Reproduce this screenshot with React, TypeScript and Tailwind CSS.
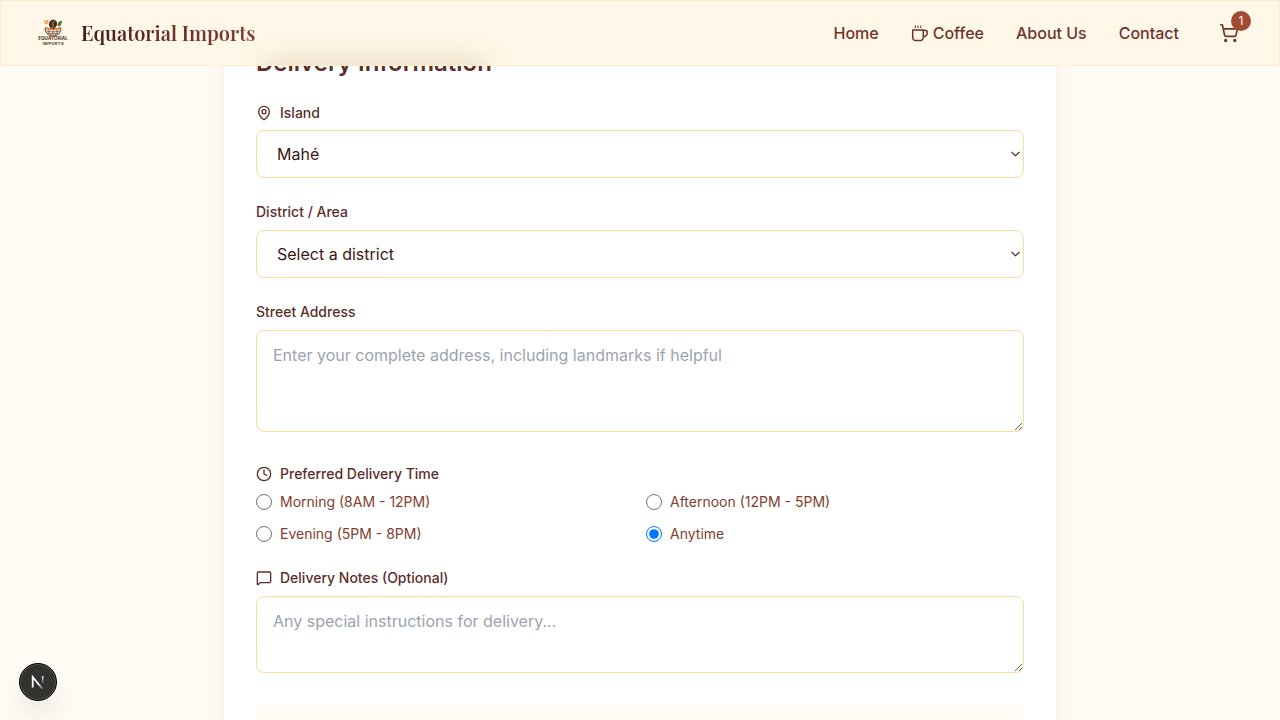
import { Clock, MapPin, MessageSquare, ShoppingCart } from "lucide-react";
import type { ReactNode } from "react";

const FIELD =
  "w-full rounded-lg border border-[#fbdc9c] bg-white text-base leading-[25.6px] text-[#3b1513] placeholder:text-[#9ca3af]";

function Label({ icon, children }: { icon?: ReactNode; children: ReactNode }) {
  return (
    <div className="flex h-5 items-center gap-2 text-sm font-medium leading-5 text-[#5d2e29]">
      {icon}
      <span>{children}</span>
    </div>
  );
}

function Select({ children }: { children: ReactNode }) {
  return (
    <div className="relative">
      <select className={`${FIELD} block h-[47.6px] appearance-none px-5 pb-0 pt-[1.8px]`}>
        <option>{children}</option>
      </select>
      <svg width="10" height="6" viewBox="0 0 10 6" fill="none" className="pointer-events-none absolute right-[3.5px] top-[21px]">
        <path d="m.5 .8 4 4 4-4" stroke="#3b1513" strokeWidth="1.100" />
      </svg>
    </div>
  );
}

function Logo() {
  return (
    <svg width="32" height="32" viewBox="0 0 32 32" fill="none">
      <path d="M8 11.500a8 7.800 0 0 0 16 0Z" fill="#f7ecd5" stroke="#65483a" strokeWidth="1" />
      <path d="M9 14q7 2 14 0M12 11.500v5l3 2M20 11.500v5l-3 2M16 11.500v7M10.500 16.200q5.500 1.500 11 0" stroke="#65483a" strokeWidth=".7" />
      <path d="M8 9.800q8 3.500 16 0l-.5 2q-7.500 2.500-15 0Z" fill="#e47832" />
      <ellipse cx="16" cy="7" rx="4" ry="4.500" transform="rotate(25 16 7)" fill="#4b2818" />
      <path d="M17.500 3.500q-3 3-1.500 4.500T14.500 11" stroke="#e7c8a3" strokeWidth=".7" />
      <path d="M20.500 8.500q-.2-4 4.300-5 .5 4-2.500 6Z" fill="#438038" />
      <path d="m7 3.500 3 1.500M7.500 6.500l3-.5M10.500 3l.5 2.500" stroke="#f08a4a" strokeWidth="1.300" />
      <text x="16" y="23.400" textAnchor="middle" textLength="29.500" lengthAdjust="spacingAndGlyphs" fontFamily="Inter, sans-serif" fontSize="4.800" fontWeight="700" fill="#54382d">EQUATORIAL</text>
      <text x="16" y="28" textAnchor="middle" textLength="21" fontFamily="Inter, sans-serif" fontSize="4" fontWeight="700" fill="#54382d">IMPORTS</text>
    </svg>
  );
}

function CoffeeIcon() {
  return (
    <svg width="18" height="18" viewBox="0 0 18 18" fill="none" stroke="currentColor" strokeWidth="1.500">
      <path d="M1.700 5h10.600v7.600a3 3 0 0 1-3 3H4.700a3 3 0 0 1-3-3Z" strokeLinejoin="round" />
      <path d="M12.300 5.200h1.400c1.700 0 2.600 1 2.600 2.500 0 2-1.600 3.700-4 4.200" />
      <path d="M4.400 .4V3M7 .4V3M9.700 .4V3" strokeOpacity=".75" />
    </svg>
  );
}

function Header() {
  return (
    <header className="fixed inset-x-0 top-0 z-20 flex h-[66px] items-center justify-between overflow-hidden border border-[#fdecc8] bg-[#fff7e7] pl-9 pr-10">
      <div className="absolute left-[262px] top-[58px] h-5 w-[224px] bg-[#d9ccb0]/60 blur-[11px]" />
      <div className="relative flex items-center gap-3">
        <Logo />
        <span className="bg-gradient-to-r from-[#45191a] via-[#6b2f28] to-[#843d2f] bg-clip-text font-['Playfair_Display','Liberation_Serif',serif] text-xl font-semibold leading-8 text-transparent">
          Equatorial Imports
        </span>
      </div>
      <nav className="relative flex items-center gap-8 font-medium text-[#6f352c]">
        <a className="pt-px">Home</a>
        <a className="flex items-center gap-1 pt-px">
          <CoffeeIcon />
          Coffee
        </a>
        <a className="pt-px">About Us</a>
        <a className="pt-px">Contact</a>
        <a className="relative ml-2 block">
          <ShoppingCart size={20} />
          <span className="absolute -right-3 -top-3 flex size-5 items-center justify-center rounded-full bg-[#a04b32] text-xs font-normal text-[#fff7e6]">1</span>
        </a>
      </nav>
    </header>
  );
}

const TIMES = ["Morning (8AM - 12PM)", "Afternoon (12PM - 5PM)", "Evening (5PM - 8PM)", "Anytime"];

export default function App() {
  return (
    <div className="h-screen overflow-hidden bg-[#fffcf5] font-['Inter',sans-serif] leading-[1.6]">
      <Header />
      <main className="mx-auto w-[832px] pt-[15px]">
        <section className="h-[1000px] bg-white p-8 shadow-[0_4px_20px_rgba(60,40,20,0.07)]">
          <h2 className="mb-6 text-2xl font-semibold leading-8 text-[#5d2e29]">Delivery Information</h2>
          <div className="flex flex-col gap-6">
            <div className="flex flex-col gap-[7.4px]">
              <Label icon={<MapPin size={16} />}>Island</Label>
              <Select>Mahé</Select>
            </div>
            <div className="flex flex-col gap-2">
              <Label>District / Area</Label>
              <Select>Select a district</Select>
            </div>
            <div className="flex flex-col gap-2 pb-[7.2px]">
              <Label>Street Address</Label>
              <textarea rows={3} className={`${FIELD} block h-[102.8px] px-4 py-3`} placeholder="Enter your complete address, including landmarks if helpful" />
            </div>
            <div className="flex flex-col gap-2">
              <Label icon={<Clock size={16} />}>Preferred Delivery Time</Label>
              <div className="grid grid-cols-2 gap-3">
                {TIMES.map((t) => (
                  <label key={t} className="flex h-5 items-center gap-2 text-sm text-[#843d2f]">
                    <input type="radio" name="time" defaultChecked={t === "Anytime"} className="size-4" />
                    {t}
                  </label>
                ))}
              </div>
            </div>
            <div className="flex flex-col gap-2 pb-[7.2px]">
              <Label icon={<MessageSquare size={16} />}>Delivery Notes (Optional)</Label>
              <textarea rows={2} className={`${FIELD} block h-[77.2px] px-4 py-3`} placeholder="Any special instructions for delivery..." />
            </div>
            <div className="h-40 rounded-lg bg-[#fffcf5]" />
          </div>
        </section>
      </main>
      <div className="fixed bottom-[19px] left-[19px] z-30 flex size-[38px] items-center justify-center rounded-full border border-black bg-[#333230] shadow-[inset_0_0_0_1px_#555,0_16px_32px_-8px_rgba(0,0,0,0.24)]">
        <svg width="14" height="14" viewBox="0 0 14 14" fill="none">
          <defs>
            <linearGradient id="diag" x1="8" y1="8" x2="12.500" y2="14" gradientUnits="userSpaceOnUse">
              <stop stopColor="#fff" />
              <stop offset="1" stopColor="#fff" stopOpacity="0.1" />
            </linearGradient>
            <linearGradient id="stem" x1="0" y1="1" x2="0" y2="9" gradientUnits="userSpaceOnUse">
              <stop stopColor="#fff" />
              <stop offset="1" stopColor="#fff" stopOpacity="0" />
            </linearGradient>
          </defs>
          <path d="M1.700 12.500V2L12 14.500" stroke="url(#diag)" strokeWidth="1.800" />
          <path d="M11.700 1.200v8" stroke="url(#stem)" strokeWidth="1.600" />
        </svg>
      </div>
    </div>
  );
}
